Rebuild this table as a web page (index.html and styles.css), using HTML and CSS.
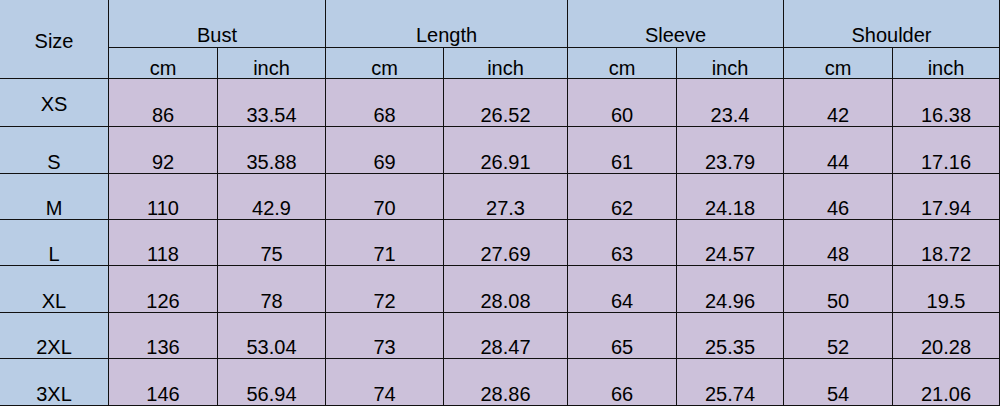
FILE: index.html
```html
<!DOCTYPE html>
<html>
<head>
<meta charset="utf-8">
<link rel="stylesheet" href="styles.css">
</head>
<body>
<div class="sheet">
  <div class="c hd size">Size</div>
  <div class="c hd grp g1">Bust</div>
  <div class="c hd grp g2">Length</div>
  <div class="c hd grp g3">Sleeve</div>
  <div class="c hd grp g4">Shoulder</div>
  <div class="c hd unit">cm</div><div class="c hd unit">inch</div>
  <div class="c hd unit">cm</div><div class="c hd unit">inch</div>
  <div class="c hd unit">cm</div><div class="c hd unit">inch</div>
  <div class="c hd unit">cm</div><div class="c hd unit">inch</div>

  <div class="c lbl first">XS</div>
  <div class="c v">86</div><div class="c v">33.54</div><div class="c v">68</div><div class="c v">26.52</div><div class="c v">60</div><div class="c v">23.4</div><div class="c v">42</div><div class="c v">16.38</div>

  <div class="c lbl">S</div>
  <div class="c v">92</div><div class="c v">35.88</div><div class="c v">69</div><div class="c v">26.91</div><div class="c v">61</div><div class="c v">23.79</div><div class="c v">44</div><div class="c v">17.16</div>

  <div class="c lbl">M</div>
  <div class="c v">110</div><div class="c v">42.9</div><div class="c v">70</div><div class="c v">27.3</div><div class="c v">62</div><div class="c v">24.18</div><div class="c v">46</div><div class="c v">17.94</div>

  <div class="c lbl">L</div>
  <div class="c v">118</div><div class="c v">75</div><div class="c v">71</div><div class="c v">27.69</div><div class="c v">63</div><div class="c v">24.57</div><div class="c v">48</div><div class="c v">18.72</div>

  <div class="c lbl">XL</div>
  <div class="c v">126</div><div class="c v">78</div><div class="c v">72</div><div class="c v">28.08</div><div class="c v">64</div><div class="c v">24.96</div><div class="c v">50</div><div class="c v">19.5</div>

  <div class="c lbl">2XL</div>
  <div class="c v">136</div><div class="c v">53.04</div><div class="c v">73</div><div class="c v">28.47</div><div class="c v">65</div><div class="c v">25.35</div><div class="c v">52</div><div class="c v">20.28</div>

  <div class="c lbl">3XL</div>
  <div class="c v">146</div><div class="c v">56.94</div><div class="c v">74</div><div class="c v">28.86</div><div class="c v">66</div><div class="c v">25.74</div><div class="c v">54</div><div class="c v">21.06</div>
</div>
</body>
</html>
```

FILE: styles.css
```css
html, body {
  margin: 0;
  padding: 0;
  background: #ffffff;
}

.sheet {
  width: 999px;
  height: 405px;
  padding: 0 1px 1px 0;
  background: #111111;
  display: grid;
  grid-template-columns: 108px 108px 107px 117px 123px 108px 106px 108px 106px;
  grid-template-rows: 47px 30px 47px 46px 45px 45px 46px 45px 46px;
  gap: 1px;
  font-family: "Liberation Sans", Arial, sans-serif;
  font-size: 20px;
  line-height: 20px;
  color: #000000;
}

.c {
  display: flex;
  justify-content: center;
  align-items: flex-end;
  padding-bottom: 1px;
  box-sizing: border-box;
  white-space: nowrap;
}

.hd {
  background: #b9cde5;
}

.size {
  grid-row: 1 / span 2;
  grid-column: 1;
  align-items: center;
  padding-bottom: 0;
  padding-top: 3px;
}

.grp {
  grid-row: 1;
  padding-bottom: 2px;
}

.g1 { grid-column: 2 / span 2; }
.g2 { grid-column: 4 / span 2; }
.g3 { grid-column: 6 / span 2; }
.g4 { grid-column: 8 / span 2; }

.unit {
  grid-row: 2;
  padding-bottom: 0;
}

.lbl {
  background: #b9cde5;
}

.lbl.first {
  align-items: center;
  padding-bottom: 0;
  padding-top: 2px;
}

.v {
  background: #ccc1da;
}
```
